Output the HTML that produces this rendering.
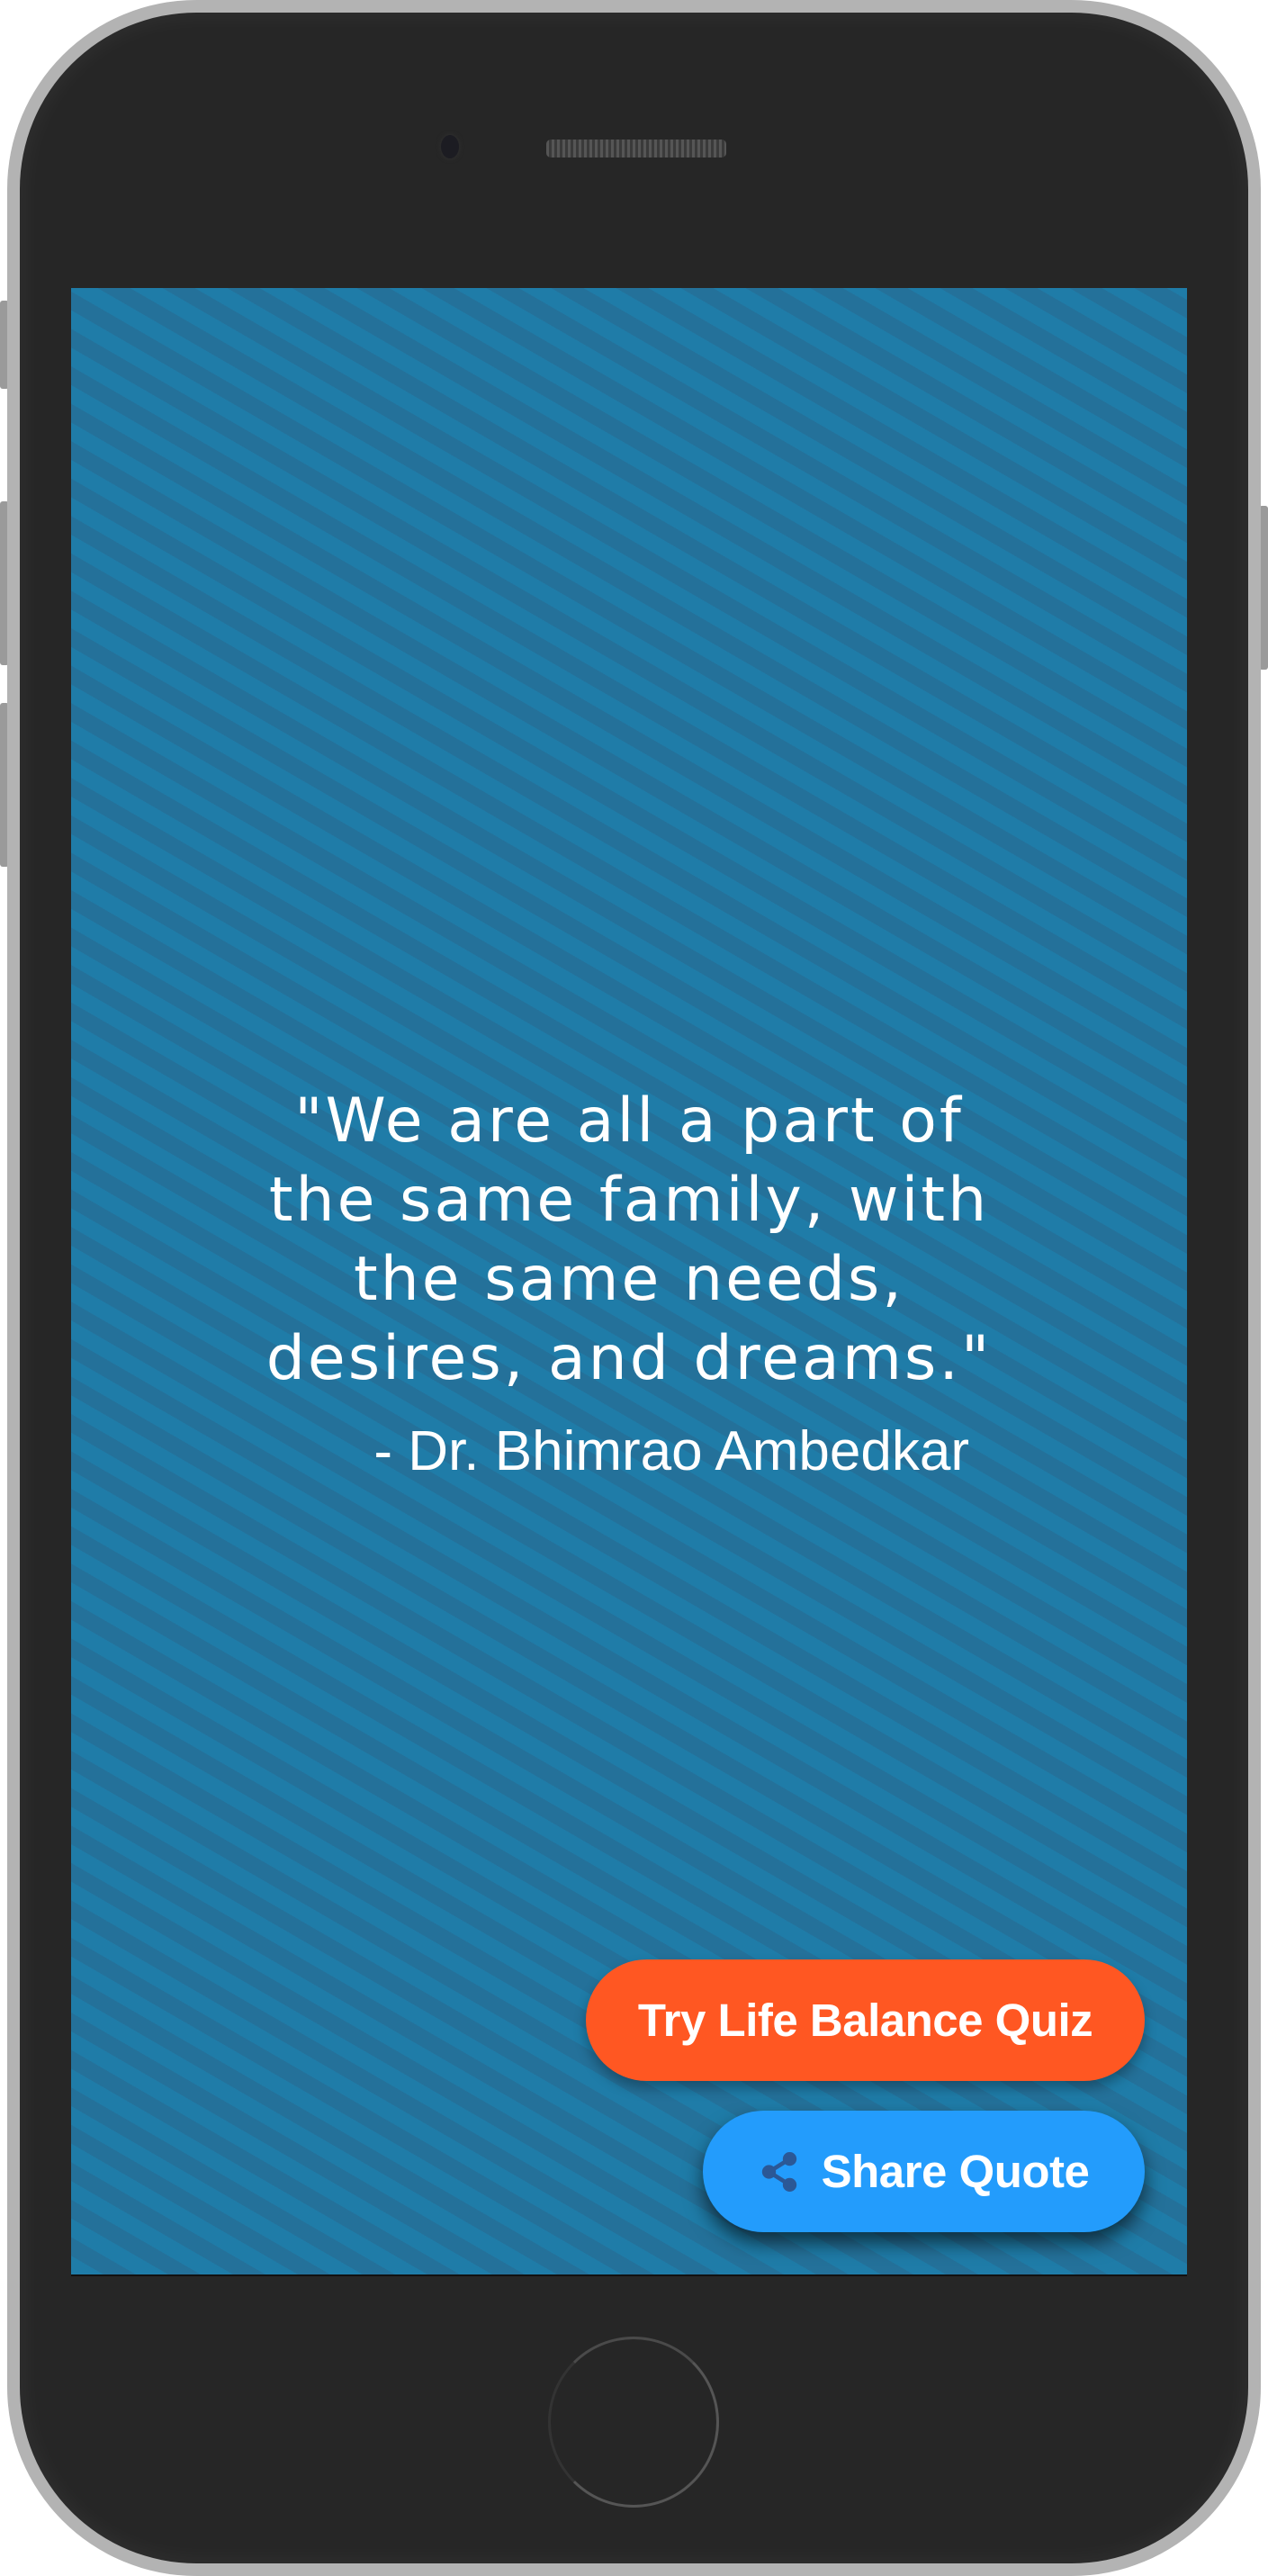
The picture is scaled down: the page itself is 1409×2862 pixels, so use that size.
<!DOCTYPE html>
<html><head><meta charset="utf-8"><style>
*{margin:0;padding:0;box-sizing:border-box}
html,body{width:1409px;height:2862px;background:#fff;overflow:hidden;position:relative}
.btnside{position:absolute;background:#9a9a9a;border-radius:3px}
.phone{position:absolute;left:8px;top:0;width:1393px;height:2862px;border-radius:210px;background:#b3b3b3;}
.inner{position:absolute;left:14px;top:14px;right:14px;bottom:14px;border-radius:196px;background:#262626;box-shadow:inset 0 0 30px rgba(255,255,255,0.06)}
.screen{position:absolute;left:79px;top:320px;width:1240px;height:2209px;background:repeating-linear-gradient(30deg,#1f7ca8 0 18px,#24719a 18px 36px);overflow:hidden;border-bottom:2px solid #111}
.quote{position:absolute;left:0;width:1240px;top:882px;text-align:center;color:#fff;font-family:"DejaVu Sans",sans-serif;font-size:68px;line-height:88px;letter-spacing:3px}
.author{position:absolute;left:0;width:998px;top:1257px;text-align:right;color:#fff;font-family:"Liberation Sans",sans-serif;font-size:62px}
.b{position:absolute;border-radius:70px;color:#fff;font-family:"Liberation Sans",sans-serif;font-weight:bold;font-size:51px;display:flex;align-items:center;justify-content:center;letter-spacing:-0.5px}
</style></head><body>
<div class="btnside" style="left:0;top:334px;width:10px;height:98px"></div>
<div class="btnside" style="left:0;top:557px;width:10px;height:182px"></div>
<div class="btnside" style="left:0;top:781px;width:10px;height:182px"></div>
<div class="btnside" style="left:1399px;top:562px;width:10px;height:182px"></div>
<div class="phone"><div class="inner"></div></div>
<div style="position:absolute;left:490px;top:150px;width:20px;height:26px;border-radius:50%;background:#1c1c22;box-shadow:0 0 6px #333"></div>
<div style="position:absolute;left:607px;top:155px;width:200px;height:20px;border-radius:5px;background:repeating-linear-gradient(90deg,#555 0 3px,#3a3a3a 3px 6px)"></div>
<div style="position:absolute;left:609px;top:2596px;width:190px;height:190px;border-radius:50%;border:3px solid #555;border-left-color:#333;border-top-color:#4a4a4a"></div>
<div class="screen">
<div class="quote">"We are all a part of<br>the same family, with<br>the same needs,<br>desires, and dreams."</div>
<div class="author">- Dr. Bhimrao Ambedkar</div>
<div class="b" style="left:572px;top:1857px;width:621px;height:135px;background:#ff5722;box-shadow:0 8px 14px rgba(0,0,0,0.3)">Try Life Balance Quiz</div>
<div class="b" style="left:702px;top:2025px;width:491px;height:135px;background:#239cfc;box-shadow:0 12px 22px rgba(0,0,0,0.6)">
<svg width="46" height="46" viewBox="0 0 24 24" style="margin-right:24px"><g fill="#2b5896" stroke="#2b5896" stroke-width="2.4"><circle cx="18" cy="4.5" r="2.8"/><circle cx="6" cy="12" r="2.8"/><circle cx="18" cy="19.5" r="2.8"/><path d="M18 4.5L6 12L18 19.5" fill="none"/></g></svg>Share Quote</div>
</div>
</body></html>
